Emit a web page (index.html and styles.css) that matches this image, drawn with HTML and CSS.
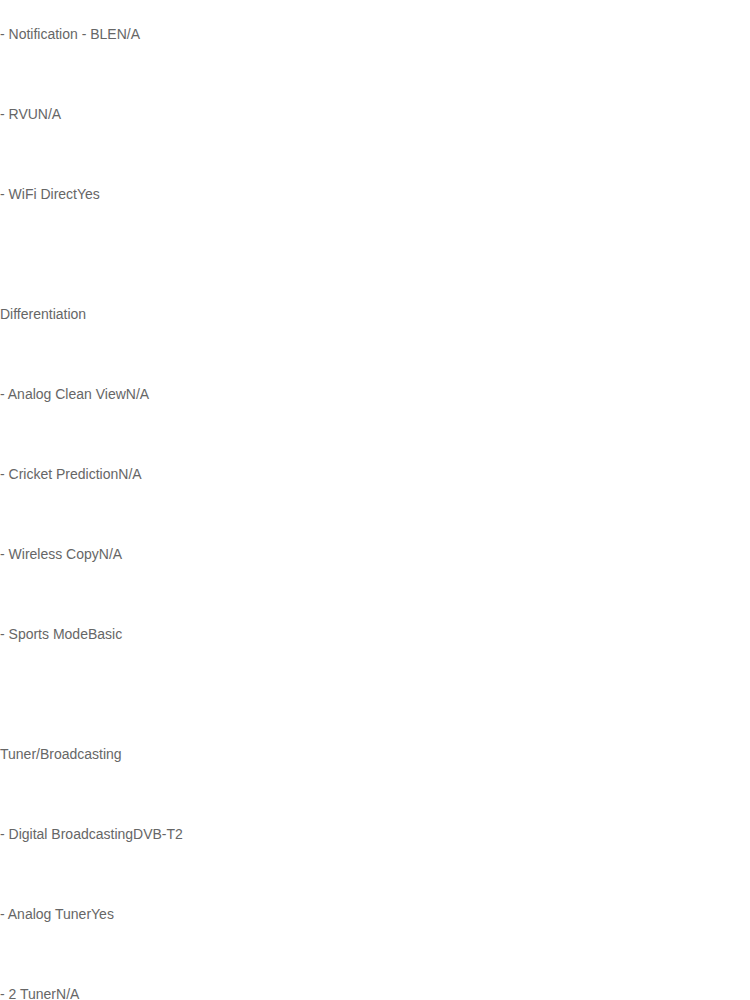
FILE: index.html
```html
<!DOCTYPE html>
<html lang="en">
<head>
  <meta charset="UTF-8" />
  <meta name="viewport" content="width=device-width, initial-scale=1.0"/>
  <title>Specifications</title>
  <link rel="stylesheet" href="styles.css">
</head>
<body>
  <div class="spec-group">
    <div class="spec-row"><span class="spec-label">- Notification - BLE</span><span class="spec-value">N/A</span></div>
    <div class="spec-row"><span class="spec-label">- RVU</span><span class="spec-value">N/A</span></div>
    <div class="spec-row"><span class="spec-label">- WiFi Direct</span><span class="spec-value">Yes</span></div>
  </div>

  <div class="spec-group">
    <div class="spec-row spec-title">Differentiation</div>
    <div class="spec-row"><span class="spec-label">- Analog Clean View</span><span class="spec-value">N/A</span></div>
    <div class="spec-row"><span class="spec-label">- Cricket Prediction</span><span class="spec-value">N/A</span></div>
    <div class="spec-row"><span class="spec-label">- Wireless Copy</span><span class="spec-value">N/A</span></div>
    <div class="spec-row"><span class="spec-label">- Sports Mode</span><span class="spec-value">Basic</span></div>
  </div>

  <div class="spec-group">
    <div class="spec-row spec-title">Tuner/Broadcasting</div>
    <div class="spec-row"><span class="spec-label">- Digital Broadcasting</span><span class="spec-value">DVB-T2</span></div>
    <div class="spec-row"><span class="spec-label">- Analog Tuner</span><span class="spec-value">Yes</span></div>
    <div class="spec-row"><span class="spec-label">- 2 Tuner</span><span class="spec-value">N/A</span></div>
  </div>
</body>
</html>
```

FILE: styles.css
```css
body {
  margin: 0;
  font-family: 'Liberation Sans', Arial, sans-serif;
  font-size: 14px;
  color: #666;
  background-color: #fff;
}

.spec-group + .spec-group {
  margin-top: 40px;
}

.spec-row {
  line-height: 20px;
  padding: 24px 0 36px;
}
```
